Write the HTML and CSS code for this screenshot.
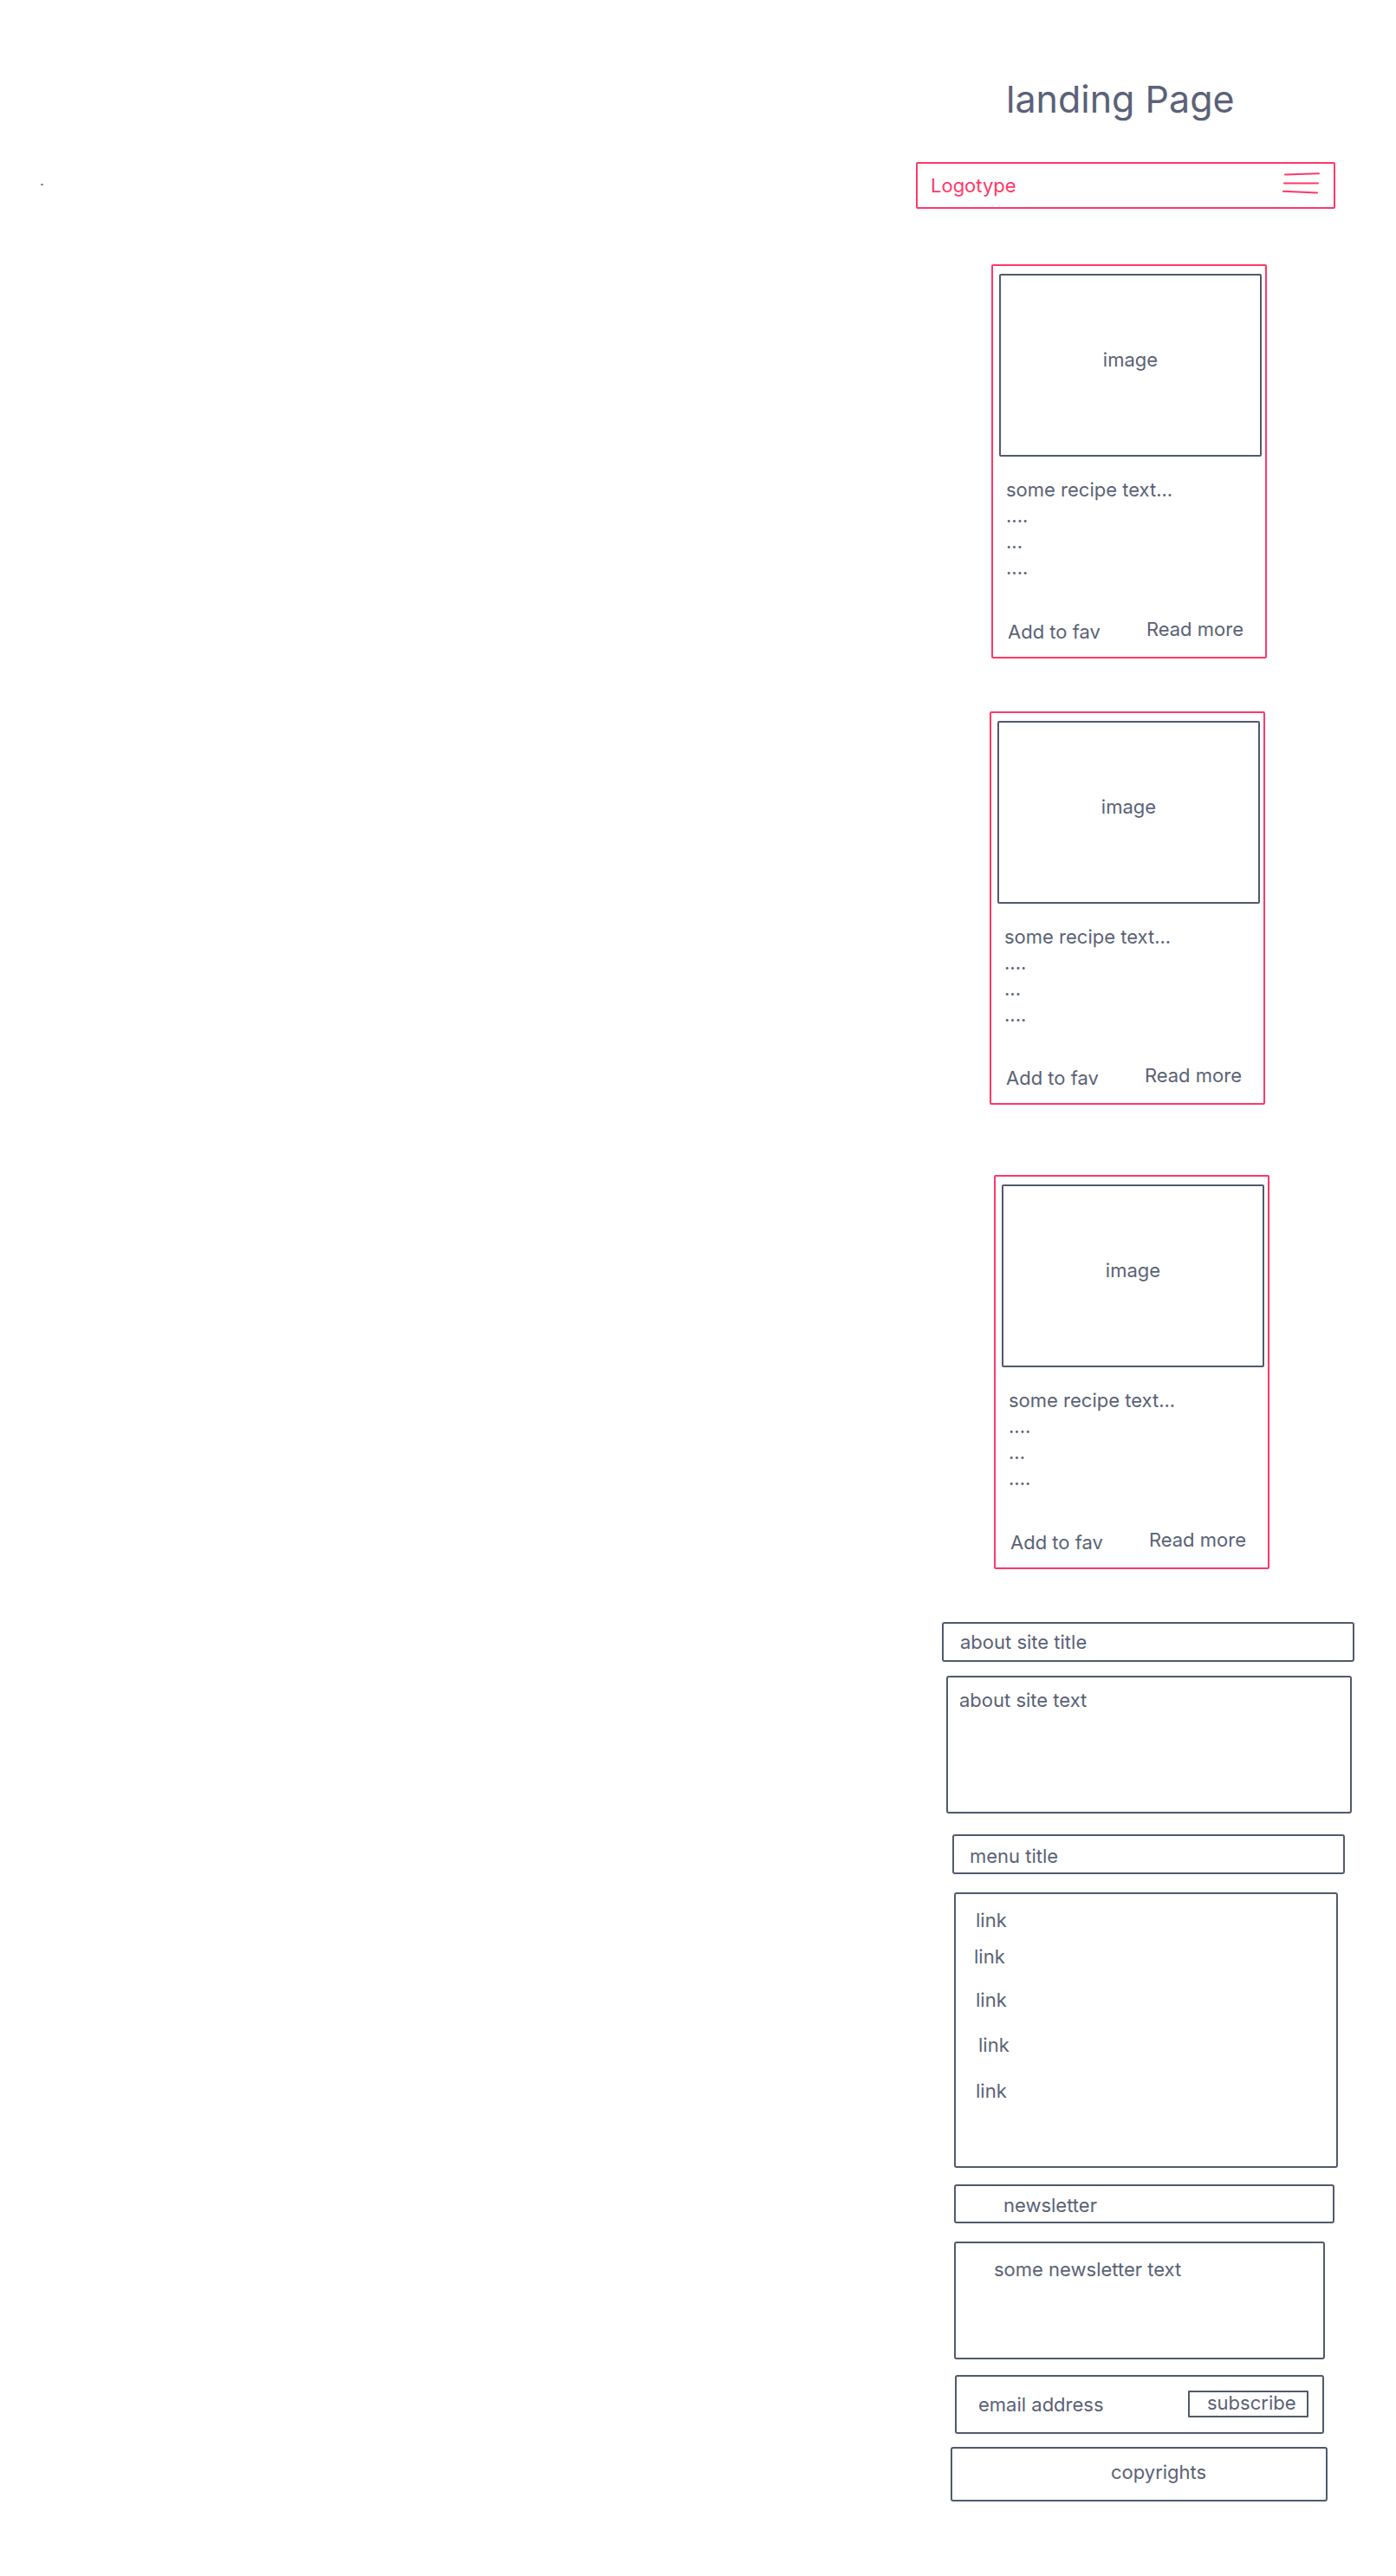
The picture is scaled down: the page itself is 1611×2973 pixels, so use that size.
FILE: index.html
```html
<!DOCTYPE html>
<html lang="en">
<head>
<meta charset="utf-8">
<title>landing Page</title>
<link rel="stylesheet" href="styles.css">
</head>
<body>
<div class="page">
  <aside class="left-col"><span class="speck"></span></aside>
  <main class="wire">
    <h1 class="title">landing Page</h1>
    <header class="nav">
      <span class="logo">Logotype</span>
      <svg class="burger" width="44" height="26" viewBox="0 0 44 26" fill="none" stroke="#ff3868" stroke-width="2" stroke-linecap="round">
        <path d="M3 2.5 L42 1.2"/>
        <path d="M2 12.5 L41 12.5"/>
        <path d="M1 21.8 L40 23.5"/>
      </svg>
    </header>

    <article class="card card-1">
      <div class="img">image</div>
      <div class="recipe">
        <p>some recipe text...</p>
        <p>....</p>
        <p>...</p>
        <p>....</p>
      </div>
      <div class="card-foot"><span class="fav">Add to fav</span><span class="more">Read more</span></div>
    </article>

    <article class="card card-2">
      <div class="img">image</div>
      <div class="recipe">
        <p>some recipe text...</p>
        <p>....</p>
        <p>...</p>
        <p>....</p>
      </div>
      <div class="card-foot"><span class="fav">Add to fav</span><span class="more">Read more</span></div>
    </article>

    <article class="card card-3">
      <div class="img">image</div>
      <div class="recipe">
        <p>some recipe text...</p>
        <p>....</p>
        <p>...</p>
        <p>....</p>
      </div>
      <div class="card-foot"><span class="fav">Add to fav</span><span class="more">Read more</span></div>
    </article>

    <div class="box about-title">about site title</div>
    <div class="box about-text">about site text</div>
    <div class="box menu-title">menu title</div>
    <ul class="box links">
      <li>link</li>
      <li>link</li>
      <li>link</li>
      <li>link</li>
      <li>link</li>
    </ul>
    <div class="box news-title">newsletter</div>
    <div class="box news-text">some newsletter text</div>
    <div class="box email">
      <span class="email-label">email address</span>
      <span class="subscribe">subscribe</span>
    </div>
    <div class="box copy">copyrights</div>
  </main>
</div>
</body>
</html>
```

FILE: styles.css
```css
* { box-sizing: border-box; }

html, body {
  margin: 0;
  padding: 0;
  background: #ffffff;
}

body {
  font-family: Inter, "Noto Sans", "Liberation Sans", sans-serif;
  font-size: 22px;
  line-height: 30px;
  color: #5a6275;
}

.page {
  display: grid;
  grid-template-columns: 1040px 1fr;
  min-height: 2973px;
}

.left-col {
  padding: 212px 0 0 47px;
}

.speck {
  display: block;
  width: 3px;
  height: 2px;
  background: #8a90a0;
}

.wire {
  display: flex;
  flex-direction: column;
  align-items: flex-start;
  padding-bottom: 80px;
}

.title {
  margin: 93px 0 0 121px;
  font-size: 43px;
  line-height: 43px;
  font-weight: 400;
  color: #5a6277;
}

/* nav */
.nav {
  margin: 51px 0 0 17px;
  width: 484px;
  height: 54px;
  border: 2px solid #ff3868;
  border-radius: 2px;
  display: flex;
  align-items: center;
  justify-content: space-between;
  padding: 0 15px 0 15px;
}

.logo {
  color: #ff3868;
}

.burger {
  display: block;
  margin-top: -4px;
}

/* cards */
.card {
  width: 318px;
  height: 455px;
  border: 2px solid #ff3868;
  border-radius: 2px;
  display: flex;
  flex-direction: column;
  padding: 9px 4px 14px 7px;
}

.card-1 { margin: 64px 0 0 104px; }
.card-2 { margin: 61px 0 0 102px; height: 454px; }
.card-3 { margin: 81px 0 0 107px; }

.img {
  height: 211px;
  border: 2px solid #515a6c;
  border-radius: 2px;
  display: flex;
  align-items: center;
  justify-content: center;
  padding-bottom: 14px;
}

.recipe {
  margin-top: 23px;
  padding-left: 8px;
}

.recipe p {
  margin: 0;
}

.card-foot {
  margin-top: auto;
  display: flex;
  justify-content: space-between;
  padding: 0 21px 0 10px;
}

.more {
  position: relative;
  top: -3px;
}

/* footer boxes */
.box {
  border: 2px solid #515a6c;
  border-radius: 3px;
  margin: 0;
}

.about-title {
  margin: 61px 0 0 47px;
  width: 476px;
  height: 46px;
  padding: 6px 0 0 19px;
}

.about-text {
  margin: 16px 0 0 52px;
  width: 468px;
  height: 159px;
  padding: 11px 0 0 13px;
}

.menu-title {
  margin: 24px 0 0 59px;
  width: 453px;
  height: 46px;
  padding: 8px 0 0 18px;
}

.links {
  margin: 21px 0 0 61px;
  width: 443px;
  height: 318px;
  padding: 15px 0 0 0;
  list-style: none;
}

.links li { padding-left: 23px; }
.links li:nth-child(2) { margin-top: 12px; padding-left: 21px; }
.links li:nth-child(3) { margin-top: 20px; }
.links li:nth-child(4) { margin-top: 22px; padding-left: 26px; }
.links li:nth-child(5) { margin-top: 23px; }

.news-title {
  margin: 19px 0 0 61px;
  width: 439px;
  height: 45px;
  padding: 7px 0 0 55px;
}

.news-text {
  margin: 21px 0 0 61px;
  width: 428px;
  height: 136px;
  padding: 15px 0 0 44px;
}

.email {
  margin: 18px 0 0 62px;
  width: 426px;
  height: 68px;
  display: flex;
  align-items: center;
  justify-content: space-between;
  padding: 0 16px 0 25px;
}

.subscribe {
  width: 139px;
  height: 31px;
  border: 2px solid #515a6c;
  border-radius: 1px;
  line-height: 24px;
  padding-left: 20px;
  margin-top: -2px;
}

.copy {
  margin: 15px 0 0 57px;
  width: 435px;
  height: 63px;
  padding: 12px 0 0 183px;
}
```
